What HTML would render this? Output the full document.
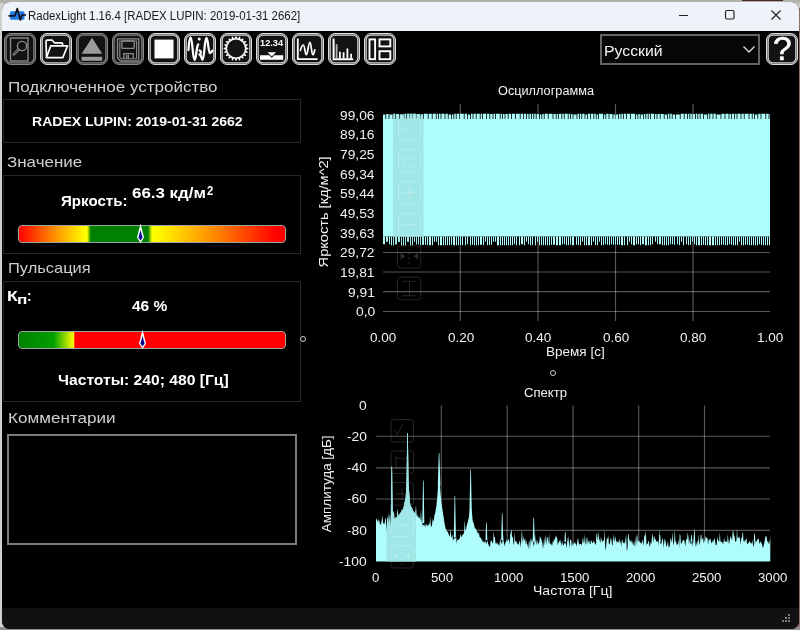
<!DOCTYPE html>
<html lang="ru">
<head>
<meta charset="utf-8">
<title>RadexLight</title>
<style>
html,body{margin:0;padding:0;}
body{width:800px;height:630px;overflow:hidden;background:#c9c8c2;font-family:"Liberation Sans",sans-serif;position:relative;}
#win{position:absolute;left:1.800px;top:1.500px;width:796.900px;height:627.200px;background:#000;border-radius:8px;overflow:hidden;}
.edge{position:absolute;}
#g{position:absolute;left:-1.800px;top:-1.500px;width:800px;height:630px;will-change:transform;}
#g *{position:absolute;}
#title{left:0;top:0;width:800px;height:31px;background:#eef3f9;}
.cap{will-change:transform;left:29px;top:8.500px;font-size:12px;letter-spacing:-0.29px;color:#1a1a1a;white-space:nowrap;line-height:14px;}
#toolbar{left:0;top:31px;width:800px;height:40px;background:#000;}
.tb{top:33px;width:32px;height:32px;box-sizing:border-box;border:1px solid #dedede;border-radius:7px;background:#121212;box-shadow:inset 0 0 0 0.8px #6c6c6c,inset 0 0 0 1.800px #d4d4d4;}
.tb.dis{border-color:#8a8a8a;box-shadow:inset 0 0 0 0.8px #484848,inset 0 0 0 1.800px #808080;}
.tb svg{left:-1px;top:-1px;width:32px;height:32px;}
.lbl{color:#cfcfcf;font-size:16px;white-space:nowrap;line-height:20px;}
.box{border:1.300px solid #272727;box-sizing:border-box;}
.b{color:#fff;font-weight:bold;white-space:nowrap;font-size:14px;line-height:16px;}
.gauge{box-sizing:border-box;border:1.300px solid #98a2a2;border-radius:4px;height:18.500px;left:17.600px;width:268.800px;}
.ct{color:#f2f2f2;font-size:13px;white-space:nowrap;line-height:14px;letter-spacing:0.3px;}
.r{text-align:right;width:60px;margin-left:-0.7px;}
.c{text-align:center;width:200px;}
#status{left:0;top:608px;width:800px;height:22px;background:#111;}
svg{overflow:visible;}
.t{position:absolute;}
</style>
</head>
<body>
<div class="edge" style="left:0;top:0;width:3px;height:630px;background:#d0d0ce;"></div><div class="edge" style="left:0;top:0;width:800px;height:3px;background:#b2b2aa;"></div><div class="edge" style="left:742px;top:0;width:41px;height:1px;background:#4a2a20;"></div><div class="edge" style="left:797px;top:8px;width:3px;height:622px;background:#8a7068;"></div><div class="edge" style="left:0;top:627px;width:800px;height:3px;background:#8e8e8e;"></div>
<div id="win"><div id="g">
  <div id="title">
    <svg style="left:8px;top:7px" width="20" height="18" viewBox="0 0 20 18">
      <rect x="2" y="4.300" width="14.500" height="8.500" rx="1.500" fill="#1e7be6"/>
      <path d="M0.500 8.800h6.500l2.300-7.300 3 11.500 1.700-5h4" fill="none" stroke="#101018" stroke-width="1.700" stroke-linejoin="round"/>
    </svg>
    <svg style="left:660.300px;top:0.300px" width="140" height="29" viewBox="0 0 140 29">
      <path d="M19 15.5h9" stroke="#222" stroke-width="1" fill="none"/>
      <rect x="65.5" y="10.500" width="8.5" height="8.500" rx="1.500" fill="none" stroke="#222" stroke-width="1.200"/>
      <path d="M111.500 10.500l9 9M120.500 10.500l-9 9" stroke="#222" stroke-width="1.200" fill="none"/>
    </svg>
  </div>
  <div id="toolbar"></div>

  <!-- toolbar buttons -->
  <div class="tb dis" style="left:4px"><svg viewBox="0 0 32 32"><rect x="6.500" y="5" width="17.500" height="23" fill="none" stroke="#8a8a8a" stroke-width="1.400"/><circle cx="18" cy="13" r="4.600" fill="none" stroke="#8a8a8a" stroke-width="1.400"/><path d="M14.500 16.500L9.800 21.300" stroke="#8a8a8a" stroke-width="2.600" stroke-linecap="round"/><path d="M14.300 16.700L10 21" stroke="#151515" stroke-width="0.800" stroke-linecap="round"/></svg></div>
  <div class="tb" style="left:40px"><svg viewBox="0 0 32 32"><path d="M6.500 24.500L6 8.500Q6 7.200 7.300 7.200H12.200L14.500 9.800H21.500Q22.600 9.800 22.600 11V12.500" fill="none" stroke="#fff" stroke-width="1.700" stroke-linejoin="round"/><path d="M10.800 12.800H27.600L22.800 24.600H6.400z" fill="none" stroke="#fff" stroke-width="1.700" stroke-linejoin="round"/></svg></div>
  <div class="tb dis" style="left:76px"><svg viewBox="0 0 32 32"><path d="M16 4.800L26.200 20.700H5.600z" fill="#9a9a9a"/><rect x="5.600" y="23.800" width="20.600" height="4" fill="#9a9a9a"/></svg></div>
  <div class="tb dis" style="left:112px"><svg viewBox="0 0 32 32"><path d="M5.500 5.800H26.800V28H8.500L5.500 25z" fill="none" stroke="#8a8a8a" stroke-width="1.300"/><path d="M7.800 8H24.600V25.800H9.400L7.800 24.200z" fill="none" stroke="#8a8a8a" stroke-width="1.100"/><rect x="9.800" y="8" width="12.400" height="7.400" rx="1" fill="none" stroke="#8a8a8a" stroke-width="1.300"/><path d="M11.800 25.800V20.600H21.200V25.800M14.600 21.800V25.500M16.400 21.800V25.500" fill="none" stroke="#8a8a8a" stroke-width="1.300"/></svg></div>
  <div class="tb" style="left:148px"><svg viewBox="0 0 32 32"><rect x="6.500" y="6.600" width="19" height="18.800" fill="#fff"/></svg></div>
  <div class="tb" style="left:184px"><svg viewBox="0 0 32 32"><path d="M4.500 17C5 9 5.600 4.500 6.600 4.500C8.600 4.500 8.600 27 10.600 27C12.200 27 12.400 13 14.200 11.500M15.600 17.500C17.500 18 17.200 21 15.400 21.500C17.800 22 17.200 26.800 18.600 26.800C20.300 26.800 20.600 5 22.400 5C24.200 5 24.200 20 26 20C27.200 20 27.800 19 28.300 17.800" fill="none" stroke="#fff" stroke-width="2.300" stroke-linecap="round" stroke-linejoin="round"/><circle cx="15.200" cy="6" r="1.500" fill="#fff"/></svg></div>
  <div class="tb" style="left:220px"><svg viewBox="0 0 32 32"><circle cx="16" cy="15.500" r="10.400" fill="#fff"/><path d="M26.09 13.98L28.80 15.50L26.09 17.02zM26.06 17.17L28.17 19.46L25.12 20.06zM25.05 20.20L26.36 23.02L23.27 22.66zM23.16 22.77L23.52 25.86L20.70 24.55zM20.56 24.62L19.96 27.67L17.67 25.56zM17.52 25.59L16.00 28.30L14.48 25.59zM14.33 25.56L12.04 27.67L11.44 24.62zM11.30 24.55L8.48 25.86L8.84 22.77zM8.73 22.66L5.64 23.02L6.95 20.20zM6.88 20.06L3.83 19.46L5.94 17.17zM5.91 17.02L3.20 15.50L5.91 13.98zM5.94 13.83L3.83 11.54L6.88 10.94zM6.95 10.80L5.64 7.98L8.73 8.34zM8.84 8.23L8.48 5.14L11.30 6.45zM11.44 6.38L12.04 3.33L14.33 5.44zM14.48 5.41L16.00 2.70L17.52 5.41zM17.67 5.44L19.96 3.33L20.56 6.38zM20.70 6.45L23.52 5.14L23.16 8.23zM23.27 8.34L26.36 7.98L25.05 10.80zM25.12 10.94L28.17 11.54L26.06 13.83z" fill="#fff"/><circle cx="16" cy="15.500" r="8.900" fill="#141414"/></svg></div>
  <div class="tb" style="left:256px"><svg viewBox="0 0 32 32"><text x="15.600" y="13.200" text-anchor="middle" font-family="Liberation Sans" font-weight="bold" font-size="9.200" fill="#fff" textLength="23" lengthAdjust="spacingAndGlyphs">12.34</text><path d="M11.500 19.300H20L15.750 23.500z" fill="#fff"/><path d="M4 22.200H13.300L15.750 25L18.200 22.200H27.200V26.800H4z" fill="#fff"/></svg></div>
  <div class="tb" style="left:292px"><svg viewBox="0 0 32 32"><path d="M5.800 5.500V26.200H25.600" fill="none" stroke="#fff" stroke-width="1.800"/><path d="M8.400 17.400C9.500 13 10.300 12 11.300 12C12.800 12 13 21.700 14.300 21.700C15.800 21.700 16.400 9.300 17.900 9.300C19.400 9.300 19.400 21.700 20.800 21.700C21.800 21.700 22.200 19 22.800 16.800" fill="none" stroke="#fff" stroke-width="1.700" stroke-linecap="round"/></svg></div>
  <div class="tb" style="left:328px"><svg viewBox="0 0 32 32"><path d="M5.600 5.500V26.300H25.200" fill="none" stroke="#fff" stroke-width="2"/><path d="M8.600 11.200V25.500" stroke="#b0b0b0" stroke-width="1.800"/><path d="M11.900 18.800V25.500M15.600 19.300V25.500M19.400 15.500V25.500M23.100 20.700V25.500" stroke="#fff" stroke-width="1.800"/></svg></div>
  <div class="tb" style="left:364px"><svg viewBox="0 0 32 32"><rect x="5.500" y="6.400" width="5.600" height="19.800" fill="none" stroke="#fff" stroke-width="1.900"/><rect x="15.500" y="6.400" width="10.800" height="7" fill="none" stroke="#fff" stroke-width="1.900"/><rect x="15.500" y="18.200" width="10.800" height="8" fill="none" stroke="#fff" stroke-width="1.900"/></svg></div>

  <!-- language combo -->
  <div style="left:599.500px;top:33.700px;width:160px;height:31px;border:2px solid #646464;box-sizing:border-box;background:#060606;"></div>
  <svg style="left:741.500px;top:44.700px" width="14" height="9" viewBox="0 0 14 9"><path d="M1.5 1.500l5.500 5.500 5.500-5.500" fill="none" stroke="#ddd" stroke-width="1.300"/></svg>
  <div class="tb" style="left:766px"></div>
  <div style="left:766.400px;top:32.200px;width:32px;height:32px;text-align:center;font-size:33.500px;line-height:34px;color:#fff;-webkit-text-stroke:0.5px #fff;">?</div>

  <!-- left panel -->
  <div class="box" style="left:3px;top:99px;width:298px;height:44px;"></div>
  <div class="box" style="left:3px;top:175px;width:298px;height:79px;"></div>
  <div class="gauge" style="top:224.600px;background:linear-gradient(to right,#ff0000 0%,#ff8c00 13%,#ffff00 25%,#ffff00 25.600%,#008000 27%,#008000 48.500%,#ffff00 50%,#ffff00 51%,#ff8c00 73%,#ff0000 97%);"></div>
  <svg style="left:135.500px;top:223.300px" width="9" height="21" viewBox="0 0 9 21"><path d="M4.500 0.500L8 14.500L4.500 20L1 14.500z" fill="#fff"/><path d="M4.500 7L6.500 14.500L4.500 17.500L2.500 14.500z" fill="#00008b"/></svg>
  <div class="box" style="left:3px;top:281px;width:298px;height:121px;"></div>
  <div class="gauge" style="top:330.500px;background:linear-gradient(to right,#008000 0%,#00a000 13%,#ffff00 20.500%,#ff0000 21%,#ff0000 100%);"></div>
  <svg style="left:137.900px;top:329.200px" width="9" height="21" viewBox="0 0 9 21"><path d="M4.500 0.500L8 14.500L4.500 20L1 14.500z" fill="#fff"/><path d="M4.500 7L6.500 14.500L4.500 17.500L2.500 14.500z" fill="#00008b"/></svg>
  <div style="left:7.400px;top:434px;width:289.500px;height:111px;border:2px solid #7c7c7c;box-sizing:border-box;"></div>

  <!-- splitters -->
  <div style="left:300px;top:335.700px;width:4px;height:4px;border:1.500px solid #cdcdcd;border-radius:50%;"></div>
  <div style="left:549.500px;top:369.700px;width:4px;height:4px;border:1.500px solid #cdcdcd;border-radius:50%;"></div>

  <!-- charts -->
  <svg style="left:0;top:0" width="800" height="630" viewBox="0 0 800 630">
    <defs>
      <clipPath id="co"><path d="M383.0 119.0H770.0V236.5H383.0zM383.0 119.2V114.6H385.4V119.2zM386.2 119.2V114.1H388.6V119.2zM389.4 119.2V114.6H392.6V119.2zM393.4 119.2V113.8H395.0V119.2zM395.8 119.2V114.1H399.0V119.2zM399.8 119.2V114.6H403.8V119.2zM404.6 119.2V113.8H406.2V119.2zM407.0 119.2V113.8H409.4V119.2zM410.2 119.2V113.8H411.8V119.2zM412.6 119.2V113.8H415.8V119.2zM416.6 119.2V114.1H419.8V119.2zM420.6 119.2V114.6H423.0V119.2zM423.8 119.2V113.8H427.8V119.2zM428.6 119.2V113.8H431.8V119.2zM432.6 119.2V113.8H435.8V119.2zM436.6 119.2V113.8H438.2V119.2zM439.0 119.2V113.8H440.6V119.2zM441.4 119.2V113.8H444.6V119.2zM445.4 119.2V113.8H447.8V119.2zM448.6 119.2V114.6H451.0V119.2zM451.8 119.2V114.6H453.4V119.2zM454.2 119.2V113.8H455.8V119.2zM456.6 119.2V113.8H459.0V119.2zM459.8 119.2V113.8H463.8V119.2zM464.6 119.2V113.8H467.0V119.2zM467.8 119.2V114.6H470.2V119.2zM471.0 119.2V113.8H472.6V119.2zM473.4 119.2V113.8H475.8V119.2zM476.6 119.2V113.8H479.8V119.2zM480.6 119.2V113.8H482.2V119.2zM483.0 119.2V113.8H486.2V119.2zM487.0 119.2V113.8H489.4V119.2zM490.2 119.2V114.1H492.6V119.2zM493.4 119.2V113.8H495.0V119.2zM495.8 119.2V113.8H499.8V119.2zM500.6 119.2V113.8H502.2V119.2zM503.0 119.2V114.1H504.6V119.2zM505.4 119.2V114.1H507.8V119.2zM508.6 119.2V113.8H511.0V119.2zM511.8 119.2V113.8H515.0V119.2zM515.8 119.2V113.8H519.8V119.2zM520.6 119.2V113.8H523.0V119.2zM523.8 119.2V113.8H526.2V119.2zM527.0 119.2V114.1H528.6V119.2zM529.4 119.2V113.8H531.0V119.2zM531.8 119.2V113.8H533.4V119.2zM534.2 119.2V113.8H535.8V119.2zM536.6 119.2V114.1H539.0V119.2zM539.8 119.2V114.6H541.4V119.2zM542.2 119.2V114.1H543.8V119.2zM544.6 119.2V113.8H547.8V119.2zM548.6 119.2V113.8H552.6V119.2zM553.4 119.2V114.1H555.8V119.2zM556.6 119.2V114.1H558.2V119.2zM559.0 119.2V113.8H561.4V119.2zM562.2 119.2V113.8H563.8V119.2zM564.6 119.2V113.8H567.8V119.2zM568.6 119.2V113.8H570.2V119.2zM571.0 119.2V114.1H572.6V119.2zM573.4 119.2V114.6H576.6V119.2zM577.4 119.2V113.8H579.0V119.2zM579.8 119.2V113.8H581.4V119.2zM582.2 119.2V113.8H584.6V119.2zM585.4 119.2V114.6H587.0V119.2zM587.8 119.2V113.8H590.2V119.2zM591.0 119.2V113.8H593.4V119.2zM594.2 119.2V113.8H595.8V119.2zM596.6 119.2V114.6H598.2V119.2zM599.0 119.2V113.8H603.0V119.2zM603.8 119.2V114.6H605.4V119.2zM606.2 119.2V113.8H608.6V119.2zM609.4 119.2V114.1H612.6V119.2zM613.4 119.2V114.6H615.0V119.2zM615.8 119.2V114.6H618.2V119.2zM619.0 119.2V114.1H620.6V119.2zM621.4 119.2V113.8H623.0V119.2zM623.8 119.2V113.8H626.2V119.2zM627.0 119.2V113.8H630.2V119.2zM631.0 119.2V113.8H635.0V119.2zM635.8 119.2V114.6H637.4V119.2zM638.2 119.2V114.1H639.8V119.2zM640.6 119.2V114.6H643.0V119.2zM643.8 119.2V114.1H645.4V119.2zM646.2 119.2V113.8H647.8V119.2zM648.6 119.2V113.8H650.2V119.2zM651.0 119.2V113.8H654.2V119.2zM655.0 119.2V114.1H656.6V119.2zM657.4 119.2V114.1H659.8V119.2zM660.6 119.2V114.1H663.8V119.2zM664.6 119.2V114.6H667.0V119.2zM667.8 119.2V113.8H669.4V119.2zM670.2 119.2V113.8H671.8V119.2zM672.6 119.2V114.6H675.0V119.2zM675.8 119.2V114.6H679.8V119.2zM680.6 119.2V113.8H683.8V119.2zM684.6 119.2V113.8H687.0V119.2zM687.8 119.2V113.8H689.4V119.2zM690.2 119.2V113.8H691.8V119.2zM692.6 119.2V114.1H695.0V119.2zM695.8 119.2V113.8H697.4V119.2zM698.2 119.2V113.8H699.8V119.2zM700.6 119.2V113.8H703.0V119.2zM703.8 119.2V114.6H707.0V119.2zM707.8 119.2V113.8H709.4V119.2zM710.2 119.2V113.8H712.6V119.2zM713.4 119.2V113.8H715.8V119.2zM716.6 119.2V114.6H720.6V119.2zM721.4 119.2V113.8H724.6V119.2zM725.4 119.2V113.8H728.6V119.2zM729.4 119.2V114.1H731.0V119.2zM731.8 119.2V113.8H734.2V119.2zM735.0 119.2V113.8H736.6V119.2zM737.4 119.2V113.8H740.6V119.2zM741.4 119.2V113.8H743.8V119.2zM744.6 119.2V113.8H748.6V119.2zM749.4 119.2V113.8H751.8V119.2zM752.6 119.2V113.8H754.2V119.2zM755.0 119.2V114.6H757.4V119.2zM758.2 119.2V113.8H760.6V119.2zM761.4 119.2V113.8H765.4V119.2zM766.2 119.2V113.8H768.6V119.2zM769.4 119.2V114.1H770.0V119.2zM383.0 236.3V244.3H385.0V236.3zM386.0 236.3V241.8H388.0V236.3zM389.0 236.3V244.3H390.0V236.3zM391.0 236.3V245.3H392.0V236.3zM393.0 236.3V245.3H394.0V236.3zM395.0 236.3V244.3H397.0V236.3zM398.0 236.3V241.8H400.0V236.3zM401.0 236.3V245.3H402.0V236.3zM403.0 236.3V245.3H404.0V236.3zM405.0 236.3V245.3H406.0V236.3zM407.0 236.3V241.8H409.0V236.3zM410.0 236.3V245.3H411.0V236.3zM412.0 236.3V245.3H413.0V236.3zM414.0 236.3V241.8H415.0V236.3zM416.0 236.3V244.3H417.0V236.3zM418.0 236.3V244.3H419.0V236.3zM420.0 236.3V245.3H421.0V236.3zM422.0 236.3V244.8H424.0V236.3zM425.0 236.3V244.8H426.0V236.3zM427.0 236.3V245.3H428.0V236.3zM429.0 236.3V245.3H431.0V236.3zM432.0 236.3V245.3H433.0V236.3zM434.0 236.3V241.8H435.0V236.3zM436.0 236.3V241.8H437.0V236.3zM438.0 236.3V245.3H439.0V236.3zM440.0 236.3V245.3H442.0V236.3zM443.0 236.3V245.3H444.0V236.3zM445.0 236.3V245.3H446.0V236.3zM447.0 236.3V245.3H448.0V236.3zM449.0 236.3V245.3H450.0V236.3zM451.0 236.3V244.8H452.0V236.3zM453.0 236.3V245.3H455.0V236.3zM456.0 236.3V245.3H457.0V236.3zM458.0 236.3V245.3H459.0V236.3zM460.0 236.3V244.8H461.0V236.3zM462.0 236.3V245.3H463.0V236.3zM465.0 236.3V245.3H466.0V236.3zM467.0 236.3V244.3H468.0V236.3zM470.0 236.3V245.3H471.0V236.3zM472.0 236.3V244.8H473.0V236.3zM474.0 236.3V245.3H475.0V236.3zM476.0 236.3V245.3H477.0V236.3zM478.0 236.3V245.3H479.0V236.3zM480.0 236.3V244.8H482.0V236.3zM483.0 236.3V245.3H484.0V236.3zM485.0 236.3V241.8H486.0V236.3zM487.0 236.3V245.3H488.0V236.3zM489.0 236.3V245.3H490.0V236.3zM491.0 236.3V244.8H492.0V236.3zM493.0 236.3V241.8H494.0V236.3zM495.0 236.3V241.8H496.0V236.3zM497.0 236.3V245.3H499.0V236.3zM500.0 236.3V245.3H501.0V236.3zM502.0 236.3V245.3H503.0V236.3zM504.0 236.3V245.3H505.0V236.3zM506.0 236.3V245.3H507.0V236.3zM508.0 236.3V245.3H509.0V236.3zM510.0 236.3V245.3H511.0V236.3zM512.0 236.3V245.3H513.0V236.3zM514.0 236.3V244.3H515.0V236.3zM516.0 236.3V245.3H517.0V236.3zM519.0 236.3V245.3H520.0V236.3zM521.0 236.3V244.3H523.0V236.3zM524.0 236.3V245.3H525.0V236.3zM526.0 236.3V241.8H527.0V236.3zM528.0 236.3V244.3H529.0V236.3zM530.0 236.3V245.3H531.0V236.3zM532.0 236.3V245.3H533.0V236.3zM535.0 236.3V245.3H536.0V236.3zM537.0 236.3V241.8H538.0V236.3zM539.0 236.3V245.3H540.0V236.3zM541.0 236.3V245.3H542.0V236.3zM543.0 236.3V245.3H544.0V236.3zM545.0 236.3V245.3H546.0V236.3zM547.0 236.3V245.3H548.0V236.3zM549.0 236.3V245.3H550.0V236.3zM551.0 236.3V244.8H552.0V236.3zM553.0 236.3V244.8H555.0V236.3zM556.0 236.3V245.3H558.0V236.3zM559.0 236.3V245.3H561.0V236.3zM562.0 236.3V244.3H563.0V236.3zM564.0 236.3V244.3H565.0V236.3zM566.0 236.3V245.3H567.0V236.3zM568.0 236.3V245.3H569.0V236.3zM570.0 236.3V244.8H571.0V236.3zM572.0 236.3V245.3H574.0V236.3zM576.0 236.3V244.8H577.0V236.3zM578.0 236.3V245.3H579.0V236.3zM580.0 236.3V245.3H581.0V236.3zM582.0 236.3V241.8H583.0V236.3zM584.0 236.3V245.3H585.0V236.3zM586.0 236.3V245.3H587.0V236.3zM588.0 236.3V245.3H590.0V236.3zM591.0 236.3V245.3H592.0V236.3zM593.0 236.3V241.8H594.0V236.3zM595.0 236.3V245.3H596.0V236.3zM597.0 236.3V245.3H598.0V236.3zM599.0 236.3V241.8H600.0V236.3zM601.0 236.3V245.3H602.0V236.3zM603.0 236.3V245.3H604.0V236.3zM605.0 236.3V244.3H606.0V236.3zM607.0 236.3V244.8H608.0V236.3zM609.0 236.3V245.3H610.0V236.3zM611.0 236.3V244.3H612.0V236.3zM613.0 236.3V244.8H614.0V236.3zM615.0 236.3V244.3H616.0V236.3zM617.0 236.3V244.8H618.0V236.3zM619.0 236.3V244.8H620.0V236.3zM621.0 236.3V245.3H623.0V236.3zM624.0 236.3V245.3H625.0V236.3zM627.0 236.3V245.3H628.0V236.3zM629.0 236.3V241.8H630.0V236.3zM631.0 236.3V244.3H632.0V236.3zM633.0 236.3V245.3H635.0V236.3zM636.0 236.3V244.3H637.0V236.3zM638.0 236.3V244.3H639.0V236.3zM640.0 236.3V245.3H641.0V236.3zM642.0 236.3V244.3H644.0V236.3zM645.0 236.3V245.3H647.0V236.3zM648.0 236.3V245.3H649.0V236.3zM650.0 236.3V245.3H651.0V236.3zM652.0 236.3V244.3H653.0V236.3zM655.0 236.3V241.8H656.0V236.3zM657.0 236.3V244.3H658.0V236.3zM659.0 236.3V244.3H661.0V236.3zM662.0 236.3V245.3H663.0V236.3zM664.0 236.3V245.3H665.0V236.3zM666.0 236.3V245.3H667.0V236.3zM668.0 236.3V245.3H669.0V236.3zM670.0 236.3V244.3H671.0V236.3zM672.0 236.3V244.3H673.0V236.3zM674.0 236.3V244.8H675.0V236.3zM677.0 236.3V244.3H678.0V236.3zM679.0 236.3V245.3H680.0V236.3zM681.0 236.3V241.8H682.0V236.3zM683.0 236.3V245.3H684.0V236.3zM686.0 236.3V244.3H687.0V236.3zM688.0 236.3V245.3H689.0V236.3zM690.0 236.3V244.8H691.0V236.3zM692.0 236.3V241.8H693.0V236.3zM694.0 236.3V244.3H695.0V236.3zM696.0 236.3V245.3H697.0V236.3zM698.0 236.3V245.3H700.0V236.3zM701.0 236.3V245.3H702.0V236.3zM703.0 236.3V244.8H704.0V236.3zM705.0 236.3V245.3H706.0V236.3zM707.0 236.3V245.3H708.0V236.3zM709.0 236.3V245.3H711.0V236.3zM712.0 236.3V245.3H714.0V236.3zM715.0 236.3V245.3H716.0V236.3zM717.0 236.3V245.3H718.0V236.3zM719.0 236.3V245.3H720.0V236.3zM721.0 236.3V244.8H722.0V236.3zM723.0 236.3V244.8H724.0V236.3zM725.0 236.3V245.3H726.0V236.3zM727.0 236.3V245.3H728.0V236.3zM729.0 236.3V244.3H730.0V236.3zM731.0 236.3V244.8H732.0V236.3zM733.0 236.3V245.3H734.0V236.3zM735.0 236.3V245.3H736.0V236.3zM737.0 236.3V245.3H738.0V236.3zM739.0 236.3V241.8H740.0V236.3zM741.0 236.3V245.3H742.0V236.3zM743.0 236.3V245.3H744.0V236.3zM745.0 236.3V244.8H746.0V236.3zM747.0 236.3V244.8H748.0V236.3zM749.0 236.3V245.3H750.0V236.3zM751.0 236.3V245.3H752.0V236.3zM753.0 236.3V245.3H754.0V236.3zM755.0 236.3V245.3H756.0V236.3zM757.0 236.3V245.3H758.0V236.3zM759.0 236.3V244.3H760.0V236.3zM761.0 236.3V244.8H762.0V236.3zM763.0 236.3V245.3H764.0V236.3zM765.0 236.3V245.3H766.0V236.3zM767.0 236.3V245.3H768.0V236.3zM769.0 236.3V245.3H770.0V236.3z"/></clipPath>
      <clipPath id="cp"><path d="M376.0 561.5L376.0 520.6L376.6 518.6L377.2 519.7L377.8 522.3L378.5 518.6L379.1 524.3L379.7 519.7L380.3 525.0L380.9 524.2L381.5 522.0L382.2 515.3L382.8 520.1L383.4 524.3L384.0 522.8L384.6 524.4L385.2 518.4L385.9 518.4L386.5 532.7L387.1 520.1L387.7 516.3L388.3 526.7L388.9 513.0L389.6 519.3L390.2 527.4L390.8 519.1L391.4 518.2L392.0 515.5L392.6 516.1L393.3 511.0L393.9 513.0L394.5 518.9L395.1 518.7L395.7 517.6L396.3 516.7L396.9 517.8L397.6 508.8L398.2 514.9L398.8 516.2L399.4 514.1L400.0 514.0L400.6 512.4L401.3 512.1L401.9 509.2L402.5 511.0L403.1 507.8L403.7 506.9L404.3 503.8L405.0 500.6L405.6 498.1L406.2 489.4L406.8 468.5L407.4 440.8L408.0 459.9L408.7 484.7L409.3 494.0L409.9 501.6L410.5 505.6L411.1 506.6L411.7 507.6L412.3 508.5L413.0 511.0L413.6 511.1L414.2 512.5L414.8 512.7L415.4 513.8L416.0 505.5L416.7 515.2L417.3 517.2L417.9 513.4L418.5 517.9L419.1 517.0L419.7 518.0L420.4 520.1L421.0 509.0L421.6 521.6L422.2 522.5L422.8 526.1L423.4 524.3L424.1 526.6L424.7 524.0L425.3 527.6L425.9 522.9L426.5 524.8L427.1 526.3L427.8 525.1L428.4 525.4L429.0 523.3L429.6 524.6L430.2 516.3L430.8 525.9L431.4 527.1L432.1 524.3L432.7 518.2L433.3 521.7L433.9 520.1L434.5 514.8L435.1 513.5L435.8 509.4L436.4 505.8L437.0 499.5L437.6 493.8L438.2 481.9L438.8 462.9L439.5 467.7L440.1 487.9L440.7 494.6L441.3 501.9L441.9 505.6L442.5 510.1L443.2 514.6L443.8 517.9L444.4 522.6L445.0 525.8L445.6 528.6L446.2 529.5L446.9 531.7L447.5 531.2L448.1 532.6L448.7 534.4L449.3 535.6L449.9 536.7L450.5 528.3L451.2 536.8L451.8 537.4L452.4 533.7L453.0 540.8L453.6 539.1L454.2 538.9L454.9 534.8L455.5 539.3L456.1 536.2L456.7 543.5L457.3 539.5L457.9 540.3L458.6 539.8L459.2 539.0L459.8 538.5L460.4 533.6L461.0 536.2L461.6 537.2L462.3 534.9L462.9 534.8L463.5 533.8L464.1 532.4L464.7 519.8L465.3 529.2L465.9 530.4L466.6 526.2L467.2 523.8L467.8 522.2L468.4 519.3L469.0 516.7L469.6 507.8L470.3 487.9L470.9 480.4L471.5 504.6L472.1 514.3L472.7 520.8L473.3 522.3L474.0 524.2L474.6 527.2L475.2 528.7L475.8 528.5L476.4 530.1L477.0 531.4L477.7 533.0L478.3 534.6L478.9 531.8L479.5 536.7L480.1 537.7L480.7 537.5L481.4 539.4L482.0 539.2L482.6 542.0L483.2 541.0L483.8 542.5L484.4 541.2L485.0 543.8L485.7 539.9L486.3 542.4L486.9 543.9L487.5 539.3L488.1 544.0L488.7 545.1L489.4 546.3L490.0 547.5L490.6 541.1L491.2 540.4L491.8 540.8L492.4 543.2L493.1 543.0L493.7 531.8L494.3 536.8L494.9 537.4L495.5 543.1L496.1 544.3L496.8 542.3L497.4 543.0L498.0 545.3L498.6 543.7L499.2 546.7L499.8 541.8L500.5 538.2L501.1 544.9L501.7 541.2L502.3 544.1L502.9 533.1L503.5 540.2L504.1 543.4L504.8 546.4L505.4 541.9L506.0 542.3L506.6 539.2L507.2 541.2L507.8 540.9L508.5 538.4L509.1 540.8L509.7 544.6L510.3 530.8L510.9 537.0L511.5 540.9L512.2 537.0L512.8 536.6L513.4 543.6L514.0 544.7L514.6 531.9L515.2 541.6L515.9 541.2L516.5 541.5L517.1 544.0L517.7 543.1L518.3 545.3L518.9 543.7L519.5 540.6L520.2 542.4L520.8 547.9L521.4 536.0L522.0 529.6L522.6 544.0L523.2 535.7L523.9 540.7L524.5 540.1L525.1 537.7L525.7 544.8L526.3 539.7L526.9 544.2L527.6 544.6L528.2 549.6L528.8 542.1L529.4 540.6L530.0 548.9L530.6 537.5L531.3 543.0L531.9 537.3L532.5 541.5L533.1 541.5L533.7 546.4L534.3 543.8L535.0 533.2L535.6 542.4L536.2 539.5L536.8 545.2L537.4 539.4L538.0 545.0L538.6 543.0L539.3 542.4L539.9 535.7L540.5 537.4L541.1 538.8L541.7 540.5L542.3 542.7L543.0 548.9L543.6 544.1L544.2 536.9L544.8 545.5L545.4 539.0L546.0 534.6L546.7 545.5L547.3 537.3L547.9 537.3L548.5 544.4L549.1 532.8L549.7 542.9L550.4 544.7L551.0 542.5L551.6 545.2L552.2 545.7L552.8 540.7L553.4 542.8L554.1 538.6L554.7 540.7L555.3 534.7L555.9 539.1L556.5 536.5L557.1 537.1L557.7 545.3L558.4 542.7L559.0 542.1L559.6 539.9L560.2 543.7L560.8 538.6L561.4 547.1L562.1 539.9L562.7 543.9L563.3 545.5L563.9 544.4L564.5 542.4L565.1 544.1L565.8 542.2L566.4 548.3L567.0 544.1L567.6 539.1L568.2 536.4L568.8 541.3L569.5 548.3L570.1 540.1L570.7 539.4L571.3 540.6L571.9 546.8L572.5 544.7L573.1 542.6L573.8 545.1L574.4 543.0L575.0 541.4L575.6 544.0L576.2 543.9L576.8 546.8L577.5 539.6L578.1 538.2L578.7 542.6L579.3 545.0L579.9 543.8L580.5 544.1L581.2 543.7L581.8 545.9L582.4 540.4L583.0 537.1L583.6 542.8L584.2 542.8L584.9 533.7L585.5 543.3L586.1 545.3L586.7 537.8L587.3 537.6L587.9 544.1L588.6 541.0L589.2 540.3L589.8 544.0L590.4 544.0L591.0 539.7L591.6 541.3L592.2 543.1L592.9 543.1L593.5 540.1L594.1 543.5L594.7 541.1L595.3 544.9L595.9 543.9L596.6 540.5L597.2 539.9L597.8 540.0L598.4 531.0L599.0 538.4L599.6 539.9L600.3 543.6L600.9 536.7L601.5 539.3L602.1 542.3L602.7 540.8L603.3 540.6L604.0 540.6L604.6 529.1L605.2 546.8L605.8 550.4L606.4 543.3L607.0 537.0L607.7 539.5L608.3 535.2L608.9 544.2L609.5 544.5L610.1 542.1L610.7 537.9L611.3 538.5L612.0 544.9L612.6 545.4L613.2 533.6L613.8 540.0L614.4 542.1L615.0 535.8L615.7 538.6L616.3 543.6L616.9 540.2L617.5 541.8L618.1 542.3L618.7 542.2L619.4 537.8L620.0 544.2L620.6 541.4L621.2 540.4L621.8 546.9L622.4 538.6L623.1 542.5L623.7 543.2L624.3 541.9L624.9 544.0L625.5 539.0L626.1 534.2L626.8 551.2L627.4 548.9L628.0 540.3L628.6 542.2L629.2 538.6L629.8 541.3L630.4 540.7L631.1 543.2L631.7 539.9L632.3 541.5L632.9 544.5L633.5 545.4L634.1 539.9L634.8 547.5L635.4 536.1L636.0 547.7L636.6 536.7L637.2 534.0L637.8 542.6L638.5 540.2L639.1 541.0L639.7 541.9L640.3 542.8L640.9 543.1L641.5 544.1L642.2 539.3L642.8 541.7L643.4 545.9L644.0 539.1L644.6 535.1L645.2 535.7L645.8 530.5L646.5 545.6L647.1 543.2L647.7 544.3L648.3 540.7L648.9 541.5L649.5 547.1L650.2 544.9L650.8 541.2L651.4 544.3L652.0 536.3L652.6 533.0L653.2 542.9L653.9 536.5L654.5 536.5L655.1 540.5L655.7 538.5L656.3 541.9L656.9 540.9L657.6 542.3L658.2 539.8L658.8 546.2L659.4 527.8L660.0 541.7L660.6 543.8L661.3 543.7L661.9 540.6L662.5 538.1L663.1 541.0L663.7 548.0L664.3 541.5L664.9 538.2L665.6 541.3L666.2 545.8L666.8 546.7L667.4 543.4L668.0 541.1L668.6 547.4L669.3 546.9L669.9 545.0L670.5 537.8L671.1 539.7L671.7 543.0L672.3 532.0L673.0 541.6L673.6 545.8L674.2 540.9L674.8 529.2L675.4 541.8L676.0 540.9L676.7 544.8L677.3 544.8L677.9 543.7L678.5 539.3L679.1 547.9L679.7 533.7L680.4 535.4L681.0 544.6L681.6 542.9L682.2 542.3L682.8 540.3L683.4 540.1L684.0 540.1L684.7 542.4L685.3 546.4L685.9 541.0L686.5 538.5L687.1 539.7L687.7 532.2L688.4 536.4L689.0 544.4L689.6 538.2L690.2 544.8L690.8 541.7L691.4 544.4L692.1 538.8L692.7 546.5L693.3 541.9L693.9 534.0L694.5 527.7L695.1 539.7L695.8 547.2L696.4 541.4L697.0 546.7L697.6 540.5L698.2 541.4L698.8 534.3L699.4 545.3L700.1 542.6L700.7 534.9L701.3 534.2L701.9 540.6L702.5 538.5L703.1 537.7L703.8 543.4L704.4 541.3L705.0 541.0L705.6 535.9L706.2 537.6L706.8 538.0L707.5 538.2L708.1 545.1L708.7 539.6L709.3 540.2L709.9 539.0L710.5 538.3L711.2 543.8L711.8 541.9L712.4 542.2L713.0 539.0L713.6 542.5L714.2 538.2L714.9 539.4L715.5 544.2L716.1 545.4L716.7 544.4L717.3 536.4L717.9 539.9L718.5 541.0L719.2 541.9L719.8 531.8L720.4 540.8L721.0 542.6L721.6 541.2L722.2 543.9L722.9 541.6L723.5 544.1L724.1 537.1L724.7 541.8L725.3 541.1L725.9 542.1L726.6 541.4L727.2 542.3L727.8 533.9L728.4 540.2L729.0 544.4L729.6 540.8L730.3 537.5L730.9 536.1L731.5 538.9L732.1 540.3L732.7 531.0L733.3 531.3L734.0 535.5L734.6 536.5L735.2 541.6L735.8 541.7L736.4 540.7L737.0 528.0L737.6 538.4L738.3 537.9L738.9 536.2L739.5 537.5L740.1 539.7L740.7 545.1L741.3 537.8L742.0 537.9L742.6 540.6L743.2 541.3L743.8 541.2L744.4 541.9L745.0 539.2L745.7 540.8L746.3 536.9L746.9 543.0L747.5 544.3L748.1 542.8L748.7 543.6L749.4 540.7L750.0 541.8L750.6 543.3L751.2 542.3L751.8 544.6L752.4 539.8L753.0 545.3L753.7 547.2L754.3 536.8L754.9 544.5L755.5 540.9L756.1 541.8L756.7 541.5L757.4 539.3L758.0 539.4L758.6 538.1L759.2 542.5L759.8 544.1L760.4 541.1L761.1 542.5L761.7 543.3L762.3 545.5L762.9 547.9L763.5 546.4L764.1 543.6L764.8 540.6L765.4 536.4L766.0 536.3L766.6 536.5L767.2 541.5L767.8 541.5L768.5 544.0L769.1 539.9L769.7 545.2L770.3 534.5L770.3 561.5zM390.7 523.0L391.47 466.4H392.07L392.9 523.0zM406.3 494.9L407.24 432.9H407.84L408.8 494.9zM422.3 523.0L423.02 480.4H423.62L424.3 523.0zM437.8 485.6L438.79 453.1H439.39L440.4 485.6zM453.8 537.0L454.56 496.0H455.16L455.9 537.0zM469.4 513.6L470.33 469.5H470.93L471.8 513.6zM485.5 540.1L486.10 522.5H486.70L487.3 540.1zM501.2 540.1L501.88 513.2H502.48L503.2 540.1zM510.5 541.7L511.08 530.3H511.68L512.2 541.7zM532.7 541.7L533.42 517.8H534.02L534.7 541.7zM564.4 541.7L564.96 531.9H565.56L566.1 541.7zM596.0 541.7L596.51 533.4H597.11L597.7 541.7zM627.5 541.7L628.05 534.2H628.65L629.2 541.7zM659.0 541.7L659.60 535.0H660.20L660.7 541.7zM690.6 541.7L691.14 535.0H691.74L692.3 541.7zM741.8 541.7L742.40 532.7H743.00L743.5 541.7zM753.7 541.7L754.23 533.4H754.83L755.4 541.7z"/></clipPath>
    </defs>
    <!-- osc grid -->
    <g stroke="rgba(255,255,255,0.34)" stroke-width="1.150" fill="none">
      <path d="M460.300 103.800V321M538 103.800V321M615.500 103.800V321M693 103.800V321"/>
      <path d="M383 252.500H770M383 272H770M383 291.600H770M383 311.500H770"/>
    </g>
    <g clip-path="url(#co)"><rect x="382" y="100" width="390" height="150" fill="#aefcfc"/><rect x="393" y="100" width="30.500" height="150" fill="#9fe6e6"/></g>
    <!-- spec grid -->
    <g stroke="rgba(255,255,255,0.34)" stroke-width="1.150" fill="none">
      <path d="M441.300 405.600V561M507.200 405.600V561M573 405.600V561M638.700 405.600V561M704.500 405.600V561"/>
      <path d="M376 436.200H770M376 467.800H770M376 499H770M376 530.300H770"/>
    </g>
    <g clip-path="url(#cp)"><rect x="375" y="400" width="397" height="165" fill="#aefcfc"/><rect x="386.500" y="400" width="29.500" height="165" fill="#9fe6e6"/></g>
    <!-- faint chart tool icons -->
    <g fill="none" stroke="rgba(255,255,255,0.22)" stroke-width="1">
      <rect x="398.500" y="118.500" width="22" height="22" rx="3"/>
      <rect x="398.500" y="149.500" width="22" height="22" rx="3"/>
      <rect x="398.500" y="181.500" width="22" height="22" rx="3"/>
      <rect x="398.500" y="213.500" width="22" height="22" rx="3"/>
      <path d="M402 128l3 4 5-9M403 155v12h13M404 160l4-2 4 2 3-2"/><path stroke-width="1.700" d="M403 192.500h13M409.500 186v13M403 224.500h13"/>
    </g>
    <g fill="none" stroke="rgba(150,150,150,0.24)" stroke-width="1">
      <rect x="397.500" y="245.800" width="23.200" height="22.200" rx="3.500"/>
      <rect x="397.500" y="277" width="23.200" height="22.800" rx="3.500"/>
      <path d="M400.500 252.800l4.800 3.400-4.800 3.400zM418.200 252.800l-4.800 3.400 4.800 3.400zM408.600 249.300h1.500v1.500h-1.500zM408.600 252.800h1.500v1.500h-1.500zM408.600 257.800h1.500v1.500h-1.500zM408.600 262.300h1.500v1.500h-1.500z" fill="rgba(150,150,150,0.3)" stroke="none"/>
      <path d="M402 281.300h14.500M402 295.700h14.500M409.400 281.500v14"/>
      <rect x="391" y="419.500" width="22.500" height="22.500" rx="3"/>
      <rect x="391" y="451" width="22.500" height="22.500" rx="3"/>
      <rect x="391" y="482.500" width="22.500" height="22.500" rx="3"/>
      <path d="M394.500 430l3 4.500 5-10M396 456v12h13M396 459l3-1.500 4 2 4-2M396 494h12M402 488v12"/>
      <path d="M391 561.500V565q0 3 3 3H410.500q3 0 3-3V561.500"/>
      <rect x="401.500" y="563.700" width="1.300" height="1.300" fill="rgba(150,150,150,0.3)" stroke="none"/>
    </g>
    <g fill="none" stroke="rgba(255,255,255,0.2)" stroke-width="1">
      <rect x="391" y="514" width="22.500" height="22.500" rx="3"/>
      <path d="M391 561.500V548.500q0-3 3-3H410.500q3 0 3 3V561.500"/>
      <path d="M396 525h12" stroke-width="1.600"/>
      <path d="M394.500 552.500l4.500 3.500-4.500 3.500zM410 552.500l-4.500 3.500 4.500 3.500zM401.500 549h1.400v1.400h-1.400zM401.500 553h1.400v1.400h-1.400zM401.500 558h1.400v1.400h-1.400z" fill="rgba(255,255,255,0.22)" stroke="none"/>
    </g>
  </svg>

  <div class="t" style="font-size:12px;color:#1a1a1a;line-height:20px;white-space:nowrap;left:28.45px;top:5.84px;transform-origin:0 0;transform:scaleX(0.9535);">RadexLight 1.16.4 [RADEX LUPIN: 2019-01-31 2662]</div>
  <div class="t" style="font-size:15px;color:#cfcfcf;line-height:20px;white-space:nowrap;left:7.97px;top:76.70px;transform-origin:0 0;transform:scaleX(1.1337);">Подключенное устройство</div>
  <div class="t" style="font-size:15px;color:#cfcfcf;line-height:20px;white-space:nowrap;left:7.47px;top:152.20px;transform-origin:0 0;transform:scaleX(1.1292);">Значение</div>
  <div class="t" style="font-size:15px;color:#cfcfcf;line-height:20px;white-space:nowrap;left:7.91px;top:258.10px;transform-origin:0 0;transform:scaleX(1.0946);">Пульсация</div>
  <div class="t" style="font-size:15px;color:#cfcfcf;line-height:20px;white-space:nowrap;left:7.86px;top:407.80px;transform-origin:0 0;transform:scaleX(1.1376);">Комментарии</div>
  <div class="t" style="font-size:13px;color:#fff;line-height:20px;white-space:nowrap;font-weight:bold;left:31.52px;top:111.50px;transform-origin:0 0;transform:scaleX(1.0799);">RADEX LUPIN: 2019-01-31 2662</div>
  <div class="t" style="font-size:14px;color:#fff;line-height:20px;white-space:nowrap;font-weight:bold;left:60.80px;top:190.75px;transform-origin:0 0;transform:scaleX(1.0770);">Яркость:</div>
  <div class="t" style="font-size:14px;color:#fff;line-height:20px;white-space:nowrap;font-weight:bold;left:132.10px;top:183.15px;transform-origin:0 0;transform:scaleX(1.2066);">66.3 кд/м</div>
  <div class="t" style="font-size:12.5px;color:#fff;line-height:20px;white-space:nowrap;font-weight:bold;left:206.80px;top:180.77px;transform-origin:0 0;transform:scaleX(0.9000);">2</div>
  <div class="t" style="font-size:14.5px;color:#fff;line-height:20px;white-space:nowrap;font-weight:bold;left:6.69px;top:285.98px;transform-origin:0 0;transform:scaleX(1.2125);">К</div>
  <div class="t" style="font-size:12px;color:#fff;line-height:20px;white-space:nowrap;font-weight:bold;left:16.97px;top:290.14px;transform-origin:0 0;transform:scaleX(1.4333);">п</div>
  <div class="t" style="font-size:14.5px;color:#fff;line-height:20px;white-space:nowrap;font-weight:bold;left:27.27px;top:285.98px;transform-origin:0 0;transform:scaleX(0.9333);">:</div>
  <div class="t" style="font-size:14px;color:#fff;line-height:20px;white-space:nowrap;font-weight:bold;left:131.60px;top:295.85px;transform-origin:0 0;transform:scaleX(1.1063);">46 %</div>
  <div class="t" style="font-size:14px;color:#fff;line-height:20px;white-space:nowrap;font-weight:bold;left:57.78px;top:370.15px;transform-origin:0 0;transform:scaleX(1.1179);">Частоты: 240; 480 [Гц]</div>
  <div class="t" style="font-size:14.5px;color:#f4f4f4;line-height:20px;white-space:nowrap;left:604.21px;top:40.78px;transform-origin:0 0;transform:scaleX(1.0904);">Русский</div>
  <div class="t" style="font-size:12px;color:#f2f2f2;line-height:20px;white-space:nowrap;left:497.60px;top:80.84px;transform-origin:0 0;transform:scaleX(1.0593);">Осциллограмма</div>
  <div class="t" style="font-size:12px;color:#f2f2f2;line-height:20px;white-space:nowrap;left:524.40px;top:382.84px;transform-origin:0 0;transform:scaleX(1.0923);">Спектр</div>
  <div class="t" style="font-size:12px;color:#f2f2f2;line-height:20px;white-space:nowrap;left:546.47px;top:341.64px;transform-origin:0 0;transform:scaleX(1.1255);">Время [с]</div>
  <div class="t" style="font-size:12px;color:#f2f2f2;line-height:20px;white-space:nowrap;left:533.33px;top:580.64px;transform-origin:0 0;transform:scaleX(1.1697);">Частота [Гц]</div>
  <div class="t" style="font-size:12px;color:#f2f2f2;line-height:20px;white-space:nowrap;left:355.65px;top:302.24px;transform-origin:0 0;transform:scaleX(1.1470);">0,0</div>
  <div class="t" style="font-size:12px;color:#f2f2f2;line-height:20px;white-space:nowrap;left:347.62px;top:282.57px;transform-origin:0 0;transform:scaleX(1.1470);">9,91</div>
  <div class="t" style="font-size:12px;color:#f2f2f2;line-height:20px;white-space:nowrap;left:339.59px;top:262.90px;transform-origin:0 0;transform:scaleX(1.1470);">19,81</div>
  <div class="t" style="font-size:12px;color:#f2f2f2;line-height:20px;white-space:nowrap;left:339.59px;top:243.23px;transform-origin:0 0;transform:scaleX(1.1470);">29,72</div>
  <div class="t" style="font-size:12px;color:#f2f2f2;line-height:20px;white-space:nowrap;left:339.59px;top:223.56px;transform-origin:0 0;transform:scaleX(1.1470);">39,63</div>
  <div class="t" style="font-size:12px;color:#f2f2f2;line-height:20px;white-space:nowrap;left:339.59px;top:203.89px;transform-origin:0 0;transform:scaleX(1.1470);">49,53</div>
  <div class="t" style="font-size:12px;color:#f2f2f2;line-height:20px;white-space:nowrap;left:339.59px;top:184.22px;transform-origin:0 0;transform:scaleX(1.1470);">59,44</div>
  <div class="t" style="font-size:12px;color:#f2f2f2;line-height:20px;white-space:nowrap;left:339.59px;top:164.55px;transform-origin:0 0;transform:scaleX(1.1470);">69,34</div>
  <div class="t" style="font-size:12px;color:#f2f2f2;line-height:20px;white-space:nowrap;left:339.59px;top:144.88px;transform-origin:0 0;transform:scaleX(1.1470);">79,25</div>
  <div class="t" style="font-size:12px;color:#f2f2f2;line-height:20px;white-space:nowrap;left:339.59px;top:125.21px;transform-origin:0 0;transform:scaleX(1.1470);">89,16</div>
  <div class="t" style="font-size:12px;color:#f2f2f2;line-height:20px;white-space:nowrap;left:339.59px;top:105.54px;transform-origin:0 0;transform:scaleX(1.1470);">99,06</div>
  <div class="t" style="font-size:12px;color:#f2f2f2;line-height:20px;white-space:nowrap;left:370.25px;top:328.24px;transform-origin:0 0;transform:scaleX(1.1260);">0.00</div>
  <div class="t" style="font-size:12px;color:#f2f2f2;line-height:20px;white-space:nowrap;left:447.85px;top:328.24px;transform-origin:0 0;transform:scaleX(1.1260);">0.20</div>
  <div class="t" style="font-size:12px;color:#f2f2f2;line-height:20px;white-space:nowrap;left:525.05px;top:328.24px;transform-origin:0 0;transform:scaleX(1.1260);">0.40</div>
  <div class="t" style="font-size:12px;color:#f2f2f2;line-height:20px;white-space:nowrap;left:602.55px;top:328.24px;transform-origin:0 0;transform:scaleX(1.1260);">0.60</div>
  <div class="t" style="font-size:12px;color:#f2f2f2;line-height:20px;white-space:nowrap;left:680.05px;top:328.24px;transform-origin:0 0;transform:scaleX(1.1260);">0.80</div>
  <div class="t" style="font-size:12px;color:#f2f2f2;line-height:20px;white-space:nowrap;left:756.99px;top:328.24px;transform-origin:0 0;transform:scaleX(1.1260);">1.00</div>
  <div class="t" style="font-size:12px;color:#f2f2f2;line-height:20px;white-space:nowrap;left:358.70px;top:396.04px;transform-origin:0 0;transform:scaleX(1.1500);">0</div>
  <div class="t" style="font-size:12px;color:#f2f2f2;line-height:20px;white-space:nowrap;left:347.45px;top:426.64px;transform-origin:0 0;transform:scaleX(1.1500);">-20</div>
  <div class="t" style="font-size:12px;color:#f2f2f2;line-height:20px;white-space:nowrap;left:347.45px;top:458.24px;transform-origin:0 0;transform:scaleX(1.1500);">-40</div>
  <div class="t" style="font-size:12px;color:#f2f2f2;line-height:20px;white-space:nowrap;left:347.45px;top:489.44px;transform-origin:0 0;transform:scaleX(1.1500);">-60</div>
  <div class="t" style="font-size:12px;color:#f2f2f2;line-height:20px;white-space:nowrap;left:347.45px;top:520.74px;transform-origin:0 0;transform:scaleX(1.1500);">-80</div>
  <div class="t" style="font-size:12px;color:#f2f2f2;line-height:20px;white-space:nowrap;left:339.40px;top:551.94px;transform-origin:0 0;transform:scaleX(1.1500);">-100</div>
  <div class="t" style="font-size:12px;color:#f2f2f2;line-height:20px;white-space:nowrap;left:372.10px;top:568.14px;transform-origin:0 0;transform:scaleX(1.1000);">0</div>
  <div class="t" style="font-size:12px;color:#f2f2f2;line-height:20px;white-space:nowrap;left:431.35px;top:568.14px;transform-origin:0 0;transform:scaleX(1.1000);">500</div>
  <div class="t" style="font-size:12px;color:#f2f2f2;line-height:20px;white-space:nowrap;left:493.55px;top:568.14px;transform-origin:0 0;transform:scaleX(1.1000);">1000</div>
  <div class="t" style="font-size:12px;color:#f2f2f2;line-height:20px;white-space:nowrap;left:560.15px;top:568.14px;transform-origin:0 0;transform:scaleX(1.1000);">1500</div>
  <div class="t" style="font-size:12px;color:#f2f2f2;line-height:20px;white-space:nowrap;left:626.00px;top:568.14px;transform-origin:0 0;transform:scaleX(1.1000);">2000</div>
  <div class="t" style="font-size:12px;color:#f2f2f2;line-height:20px;white-space:nowrap;left:691.70px;top:568.14px;transform-origin:0 0;transform:scaleX(1.1000);">2500</div>
  <div class="t" style="font-size:12px;color:#f2f2f2;line-height:20px;white-space:nowrap;left:757.50px;top:568.14px;transform-origin:0 0;transform:scaleX(1.1000);">3000</div>
  <div class="t" style="font-size:12px;color:#f2f2f2;line-height:20px;white-space:nowrap;left:224.40px;top:201.56px;width:200px;text-align:center;transform-origin:100px 9.84px;transform:rotate(-90deg) scaleX(1.2167);">Яркость [кд/м^2]</div>
  <div class="t" style="font-size:12px;color:#f2f2f2;line-height:20px;white-space:nowrap;left:226.50px;top:473.86px;width:200px;text-align:center;transform-origin:100px 9.84px;transform:rotate(-90deg) scaleX(1.1221);">Амплитуда [дБ]</div>
  <div id="status"></div>
  <svg style="left:780px;top:613px" width="12" height="12" viewBox="0 0 12 12" fill="#777">
    <rect x="8" y="1" width="2" height="2"/><rect x="5" y="4" width="2" height="2"/><rect x="8" y="4" width="2" height="2"/>
    <rect x="2" y="7" width="2" height="2"/><rect x="5" y="7" width="2" height="2"/><rect x="8" y="7" width="2" height="2"/>
  </svg>
</div></div>
</body>
</html>
